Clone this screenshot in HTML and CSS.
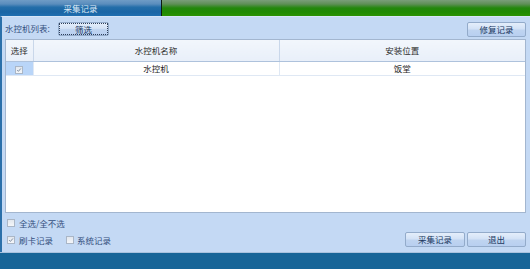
FILE: index.html
```html
<!DOCTYPE html>
<html>
<head>
<meta charset="utf-8">
<title>采集记录</title>
<link rel="stylesheet" href="styles.css">
</head>
<body>
<div class="window">
  <div class="tabbar">
    <div class="tab">采集记录</div>
    <div class="tab-sep"></div>
    <div class="tab-rest"></div>
  </div>
  <div class="main">
    <div class="toolbar">
      <span class="label">水控机列表:</span>
      <button class="btn btn-filter">筛选</button>
      <span class="spacer"></span>
      <button class="btn btn-repair">修复记录</button>
    </div>
    <div class="grid">
      <table>
        <thead>
          <tr><th class="c-sel">选择</th><th class="c-name">水控机名称</th><th class="c-loc">安装位置</th></tr>
        </thead>
        <tbody>
          <tr><td class="c-sel sel-cell"><span class="cb cb-small checked"><svg viewBox="0 0 8 8"><path d="M1.6 4.2 L3.2 5.8 L6.4 2" fill="none" stroke="#6a7a90" stroke-width="1.1"/></svg></span></td><td>水控机</td><td>饭堂</td></tr>
        </tbody>
      </table>
    </div>
    <div class="bottom">
      <div class="options">
        <label class="opt"><span class="cb"></span>全选/全不选</label>
        <div class="opt-row">
          <label class="opt"><span class="cb checked"><svg viewBox="0 0 8 8"><path d="M1.5 4.2 L3.2 5.9 L6.5 2" fill="none" stroke="#6a7a90" stroke-width="1.1"/></svg></span>刷卡记录</label>
          <label class="opt opt-sys"><span class="cb"></span>系统记录</label>
        </div>
      </div>
      <div class="actions">
        <button class="btn btn-collect">采集记录</button>
        <button class="btn btn-exit">退出</button>
      </div>
    </div>
  </div>
  <div class="statusbar"></div>
</div>
</body>
</html>
```
FILE: styles.css
```css
* { box-sizing: border-box; }
html, body { margin: 0; padding: 0; }
body {
  width: 530px;
  height: 269px;
  overflow: hidden;
  font-family: "Noto Sans CJK SC", "Noto Sans", sans-serif;
  font-size: 8.5px;
  background: #c4d9f4;
}
.window { display: flex; flex-direction: column; height: 269px; }

.tabbar { display: flex; height: 16px; }
.tab {
  width: 161px;
  background: linear-gradient(#6e9cc6 0%, #5a8dbd 25%, #236ea9 45%, #1a65a5 75%, #1f6eb0 100%);
  color: #dbe8f5;
  text-align: center;
  line-height: 16px;
}
.tab-sep { width: 1px; background: #0b1a10; }
.tab-rest {
  flex: 1;
  background: linear-gradient(#7a9e7a 0%, #5f8f58 25%, #23870c 50%, #1f8a03 75%, #2a9204 100%);
}

.main {
  flex: 1;
  display: flex;
  flex-direction: column;
  border-left: 2px solid #2b70aa;
  border-top: 1px solid #d6e5f8;
  padding: 0 4px 0 3px;
  background: #c4d9f4;
}

.toolbar {
  display: flex;
  align-items: flex-start;
  height: 22px;
  padding-top: 5px;
}
.label {
  color: #34507e;
  line-height: 13px;
  width: 53px;
  flex-shrink: 0;
  white-space: nowrap;
}
.spacer { flex: 1; }

.btn {
  font-family: inherit;
  font-size: 8.5px;
  color: #20385f;
  border: 1px solid #93abca;
  border-radius: 2px;
  background: linear-gradient(#e4eefb 0%, #d3e2f6 45%, #bfd4f0 55%, #b8cff0 100%);
  padding: 0;
  margin: 0;
  text-align: center;
}
.btn-filter {
  width: 51px;
  height: 14px;
  line-height: 12px;
  outline: 1px dotted #2e3e58;
  outline-offset: -2px;
}
.btn-repair { width: 59px; height: 15px; line-height: 13px; }

.grid {
  height: 174px;
  background: #fff;
  border: 1px solid #a3b6cf;
}
table { border-collapse: collapse; width: 100%; }
th {
  height: 21px;
  font-weight: normal;
  color: #2b2b2b;
  background: linear-gradient(#f2f6fc, #e8eff9);
  border-right: 1px solid #c9d7ea;
  border-bottom: 1px solid #aec2dc;
  padding: 0;
}
th:last-child, td:last-child { border-right: none; }
td {
  height: 14px;
  text-align: center;
  color: #1e1e1e;
  border-right: 1px solid #dfe8f4;
  border-bottom: 1px solid #dfe8f4;
  padding: 0;
}
.c-sel { width: 27px; }
.c-name { width: 246px; }
.sel-cell { background: #b9d5f8; }

.cb {
  display: inline-block;
  width: 8px;
  height: 8px;
  border: 1px solid #aab6c6;
  background: linear-gradient(#e2e7ee, #f4f6f9);
  vertical-align: middle;
  position: relative;
}
.cb svg { display: block; width: 6px; height: 6px; }
.cb-small { width: 8px; height: 8px; }

.bottom {
  flex: 1;
  display: flex;
  justify-content: space-between;
  align-items: flex-end;
  padding-bottom: 5px;
}
.options {
  align-self: flex-start;
  padding: 4px 0 0 2px;
  display: flex;
  flex-direction: column;
  gap: 5px;
}
.opt-row { display: flex; }
.opt {
  display: flex;
  align-items: center;
  gap: 4px;
  color: #34507e;
  line-height: 12px;
}
.opt-sys { margin-left: 13px; gap: 3px; }
.actions { display: flex; gap: 2px; }
.btn-collect { width: 60px; height: 15px; line-height: 13px; }
.btn-exit { width: 59px; height: 15px; line-height: 13px; }

.statusbar {
  height: 17px;
  background: #176598;
  border-top: 1px solid #a9c2de;
}
```
